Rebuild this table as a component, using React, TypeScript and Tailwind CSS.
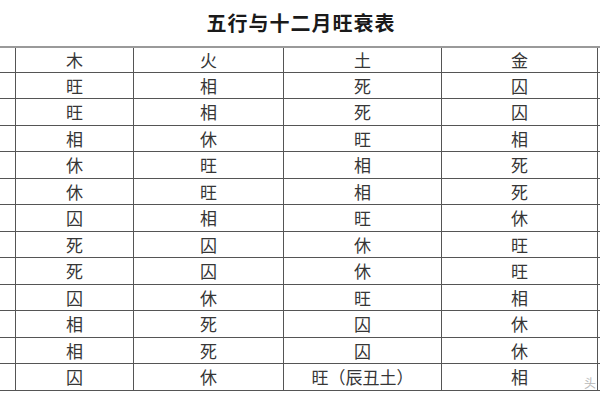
const header = ['木', '火', '土', '金'];

const rows: string[][] = [
  ['旺', '相', '死', '囚'],
  ['旺', '相', '死', '囚'],
  ['相', '休', '旺', '相'],
  ['休', '旺', '相', '死'],
  ['休', '旺', '相', '死'],
  ['囚', '相', '旺', '休'],
  ['死', '囚', '休', '旺'],
  ['死', '囚', '休', '旺'],
  ['囚', '休', '旺', '相'],
  ['相', '死', '囚', '休'],
  ['相', '死', '囚', '休'],
  ['囚', '休', '旺（辰丑土）', '相'],
];

const Row = ({ cells, first }: { cells: string[]; first?: boolean }) => (
  <div
    className={`grid grid-cols-[16px_118px_150px_158px_156px_2px] h-[26.5px] border-b-[1.5px] border-[#555] ${
      first ? 'border-t-2 border-t-[#9a9a9a]' : ''
    }`}
  >
    <div className="border-r-[1.5px] border-[#555]" />
    {cells.map((c, i) => (
      <div
        key={i}
        className="flex items-center justify-center border-r-[1.5px] border-[#555] text-[17px] leading-none text-[#363636]"
      >
        {c}
      </div>
    ))}
    <div />
  </div>
);

export default function App() {
  return (
    <div
      className="relative w-[600px] h-[400px] overflow-hidden bg-white"
      style={{ fontFamily: '"Noto Sans CJK SC", "Noto Sans", sans-serif' }}
    >
      <div className="h-[46px] flex items-center justify-center pl-[2px]">
        <h1 className="text-[20px] font-bold tracking-[1px] text-[#1a1a1a]">五行与十二月旺衰表</h1>
      </div>
      <Row cells={header} first />
      {rows.map((r, i) => (
        <Row key={i} cells={r} />
      ))}
      <div className="absolute left-[584px] top-[377px] text-[12px] leading-none text-[#b8b8b8]">头</div>
    </div>
  );
}
